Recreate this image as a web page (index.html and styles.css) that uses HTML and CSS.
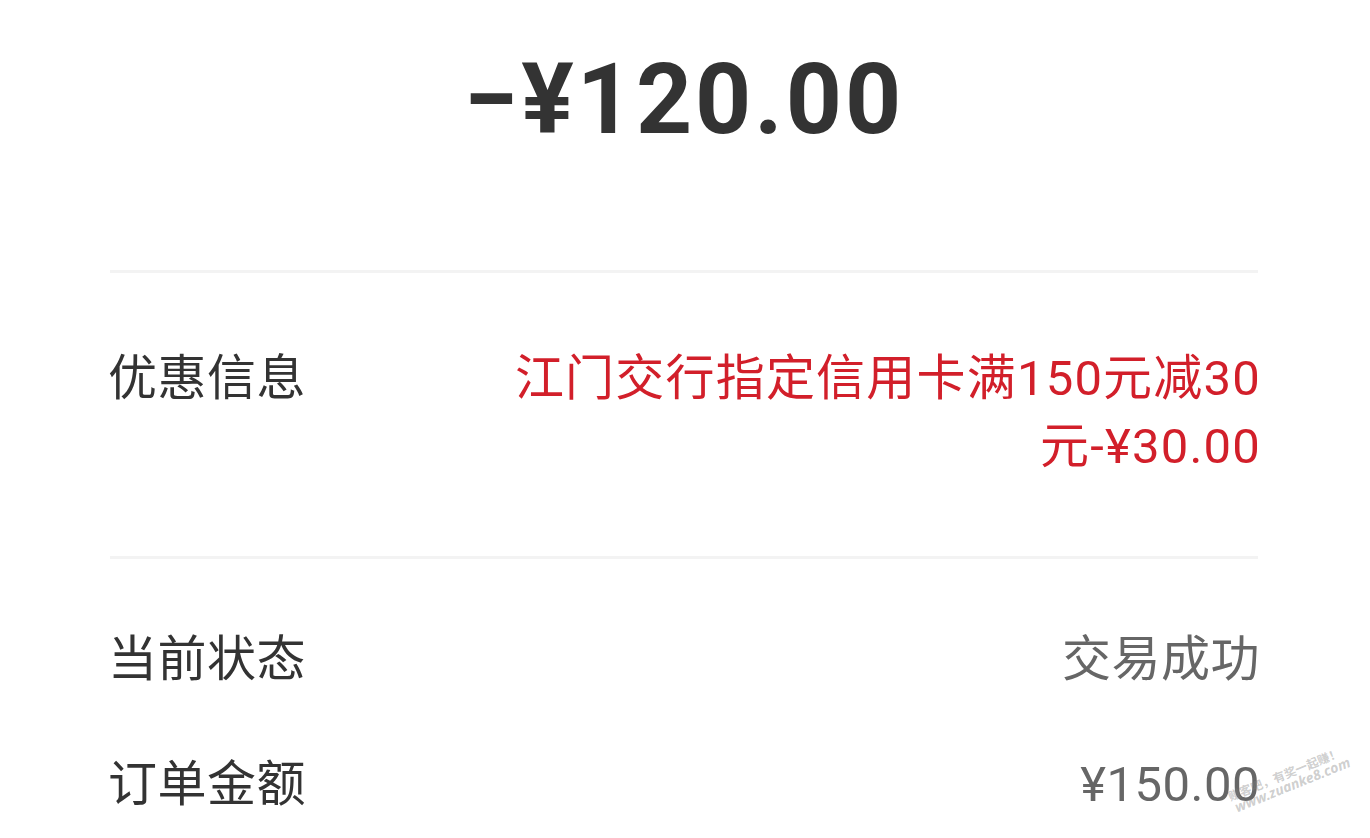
FILE: index.html
```html
<!DOCTYPE html>
<html lang="zh-CN">
<head>
<meta charset="utf-8">
<title>交易详情</title>
<link rel="stylesheet" href="styles.css">
</head>
<body>
<div class="page">
  <header class="amount-box">
    <div class="amount">−¥120.00</div>
  </header>
  <div class="divider"></div>
  <section class="row row-discount">
    <div class="label">优惠信息</div>
    <div class="value red">江门交行指定信用卡满150元减30元-¥30.00</div>
  </section>
  <div class="divider"></div>
  <section class="list">
    <div class="row row-plain">
      <div class="label">当前状态</div>
      <div class="value gray">交易成功</div>
    </div>
    <div class="row row-plain">
      <div class="label">订单金额</div>
      <div class="value gray">¥150.00</div>
    </div>
  </section>
  <div class="watermark">
    <div class="wm-line1">赚客吧，有奖一起赚！</div>
    <div class="wm-line2">www.zuanke8.com</div>
  </div>
</div>
</body>
</html>
```
FILE: styles.css
```css
html, body {
  margin: 0;
  padding: 0;
  background: #ffffff;
}
body {
  font-family: Roboto, "Noto Sans CJK SC", sans-serif;
  color: #333333;
  width: 1370px;
  height: 838px;
  overflow: hidden;
}
.page {
  position: relative;
  height: 838px;
  padding: 0 110px 0 108px;
}
.amount-box {
  height: 270px;
  display: flex;
  justify-content: center;
}
.amount {
  font-family: Roboto, "Noto Sans CJK SC", sans-serif;
  font-weight: 700;
  font-size: 98px;
  line-height: 100px;
  margin-top: 50px;
  color: #333333;
  letter-spacing: 3px;
}
.divider {
  height: 3px;
  background: #f3f3f3;
  margin: 0 2px;
}
.row {
  display: flex;
  justify-content: space-between;
  align-items: flex-start;
  font-size: 49px;
  line-height: 68px;
}
.row-discount {
  padding: 72px 0 75px;
}
.label {
  flex: none;
  color: #333333;
  letter-spacing: 0.5px;
}
.value {
  text-align: right;
  max-width: 770px;
}
.red {
  color: #d21f2a;
  letter-spacing: 1.2px;
  margin-right: -1px;
}
.gray {
  color: #666666;
  letter-spacing: 0.5px;
}
.list {
  display: flex;
  flex-direction: column;
  gap: 57px;
  padding-top: 67px;
}
.watermark {
  position: absolute;
  left: 1226px;
  top: 790px;
  transform: rotate(-22deg);
  transform-origin: left top;
  color: rgba(130, 130, 130, 0.4);
  font-family: "Noto Sans CJK SC", sans-serif;
  font-weight: 700;
  white-space: nowrap;
}
.wm-line1 {
  font-size: 12px;
  line-height: 13px;
}
.wm-line2 {
  font-size: 14px;
  line-height: 14px;
  font-family: "Noto Sans", sans-serif;
  font-style: italic;
  padding-left: 2px;
}
```
